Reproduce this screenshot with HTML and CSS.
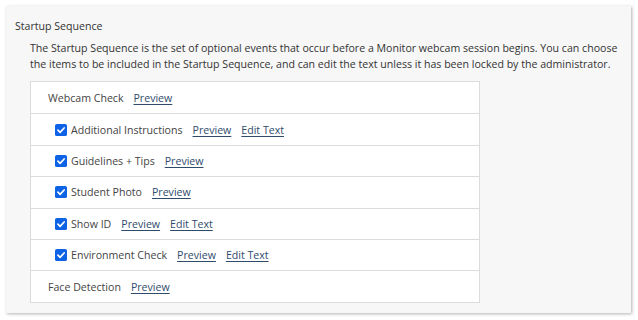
FILE: index.html
```html
<!DOCTYPE html>
<html>
<head>
<meta charset="utf-8">
<link rel="stylesheet" href="styles.css">
</head>
<body>
<div class="panel">
  <div class="title">Startup Sequence</div>
  <div class="content">
    <p class="desc">The Startup Sequence is the set of optional events that occur before a Monitor webcam session begins. You can choose the items to be included in the Startup Sequence, and can edit the text unless it has been locked by the administrator.</p>
    <div class="list">
      <div class="row"><span class="label">Webcam Check</span><a class="link">Preview</a></div>
      <div class="row sub"><span class="cb"><svg viewBox="0 0 13 13" width="12" height="12"><rect x="0" y="0" width="13" height="13" rx="2" fill="#0d62e5"/><path d="M3.2 6.7 L5.5 9 L9.9 4.3" fill="none" stroke="#fff" stroke-width="1.8" stroke-linecap="round" stroke-linejoin="round"/></svg></span><span class="label">Additional Instructions</span><a class="link">Preview</a><a class="link">Edit Text</a></div>
      <div class="row sub"><span class="cb"><svg viewBox="0 0 13 13" width="12" height="12"><rect x="0" y="0" width="13" height="13" rx="2" fill="#0d62e5"/><path d="M3.2 6.7 L5.5 9 L9.9 4.3" fill="none" stroke="#fff" stroke-width="1.8" stroke-linecap="round" stroke-linejoin="round"/></svg></span><span class="label">Guidelines + Tips</span><a class="link">Preview</a></div>
      <div class="row sub"><span class="cb"><svg viewBox="0 0 13 13" width="12" height="12"><rect x="0" y="0" width="13" height="13" rx="2" fill="#0d62e5"/><path d="M3.2 6.7 L5.5 9 L9.9 4.3" fill="none" stroke="#fff" stroke-width="1.8" stroke-linecap="round" stroke-linejoin="round"/></svg></span><span class="label">Student Photo</span><a class="link">Preview</a></div>
      <div class="row sub"><span class="cb"><svg viewBox="0 0 13 13" width="12" height="12"><rect x="0" y="0" width="13" height="13" rx="2" fill="#0d62e5"/><path d="M3.2 6.7 L5.5 9 L9.9 4.3" fill="none" stroke="#fff" stroke-width="1.8" stroke-linecap="round" stroke-linejoin="round"/></svg></span><span class="label">Show ID</span><a class="link">Preview</a><a class="link">Edit Text</a></div>
      <div class="row sub"><span class="cb"><svg viewBox="0 0 13 13" width="12" height="12"><rect x="0" y="0" width="13" height="13" rx="2" fill="#0d62e5"/><path d="M3.2 6.7 L5.5 9 L9.9 4.3" fill="none" stroke="#fff" stroke-width="1.8" stroke-linecap="round" stroke-linejoin="round"/></svg></span><span class="label">Environment Check</span><a class="link">Preview</a><a class="link">Edit Text</a></div>
      <div class="row"><span class="label">Face Detection</span><a class="link">Preview</a></div>
    </div>
  </div>
</div>
</body>
</html>
```

FILE: styles.css
```css
html, body {
  margin: 0;
  padding: 0;
  background: #ffffff;
}
body {
  padding: 6px 7px 7px 6px;
  font-family: "Open Sans", "Noto Sans", sans-serif;
  font-size: 10.6px;
  color: #333333;
}
.panel {
  background: #f7f7f7;
  width: 625px;
  height: 307px;
  box-sizing: border-box;
  box-shadow: 1px 1px 3px rgba(0,0,0,0.3);
  padding: 12px 0 0 9px;
}
.title {
  line-height: 16px;
  color: #333;
}
.content {
  padding: 6px 0 0 15px;
}
.desc {
  margin: 0;
  line-height: 16px;
  color: #333;
}
.list {
  margin-top: 9px;
  width: 450px;
  background: #fff;
  border: 1px solid #dcdcdc;
  box-sizing: border-box;
}
.row {
  height: 31.4px;
  display: flex;
  align-items: center;
  padding-left: 17px;
  border-top: 1px solid #dcdcdc;
  box-sizing: border-box;
  gap: 10px;
}
.row:first-child { border-top: none; }
.row.sub { padding-left: 24px; }
.cb {
  display: flex;
  margin-right: -6px;
}
.label { color: #444; }
.link {
  color: #2f4b6c;
  text-decoration: underline;
  text-underline-offset: 2px;
}
```
